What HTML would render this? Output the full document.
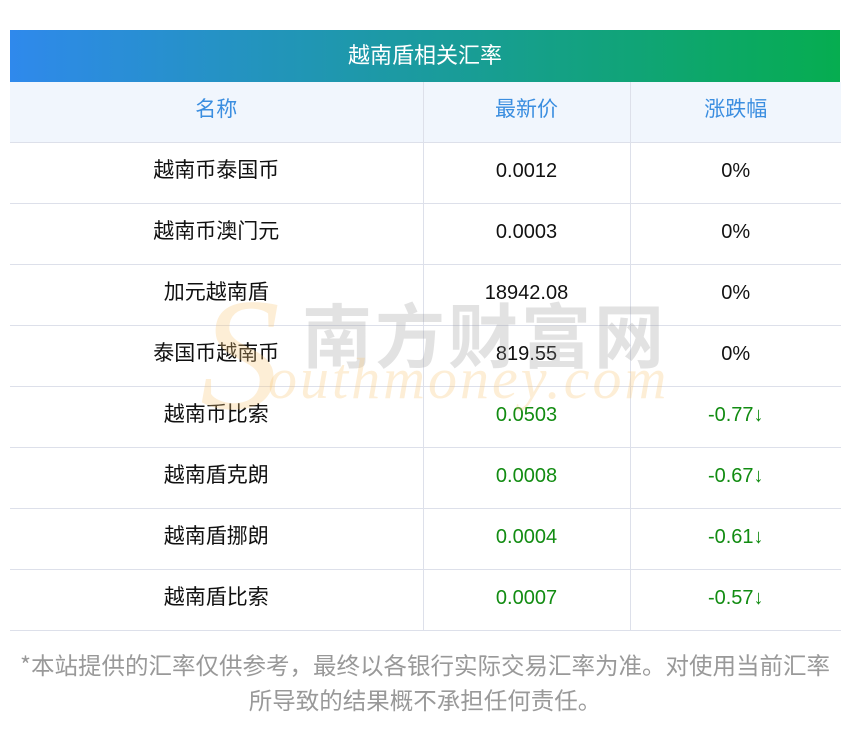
<!DOCTYPE html>
<html><head><meta charset="utf-8"><style>
body{margin:0;width:850px;height:733px;background:#fff;font-family:"Liberation Sans","Noto Sans CJK SC",sans-serif;position:relative;overflow:hidden}
.title{position:absolute;left:10px;top:30px;width:830px;height:52px;background:linear-gradient(90deg,#2f89ec,#06ad50);color:#fff;font-size:22px;line-height:48px;text-align:center;font-family:"Noto Sans CJK SC",sans-serif}
table{position:absolute;left:10px;top:82px;width:831px;border-collapse:collapse;font-size:20px}
td{border:1px solid #dde0ea;text-align:center;padding:0 0 3px 0;box-sizing:border-box;height:61px;color:#111;line-height:24px}
td.c{font-family:"Noto Sans CJK SC",sans-serif;font-size:21px;padding-bottom:7px}
tr:first-child td{background:#f1f6fd;color:#3b8ee0;border-top:none;height:60px}
td:first-child{border-left:none;width:413px}
td:nth-child(2){width:207px}
td:last-child{border-right:none}
.g{color:#128c12}
.foot{position:absolute;left:0;top:647px;width:850px;text-align:center;color:#999;font-size:23.5px;line-height:35px;font-family:"Noto Sans CJK SC",sans-serif;white-space:nowrap}
.wm1{position:absolute;left:302px;top:282px;font-size:70px;color:rgba(150,150,150,.28);letter-spacing:3px;font-family:"Noto Sans CJK SC",sans-serif;font-weight:bold;z-index:2}
.wm2{position:absolute;left:268px;top:345px;font-size:58px;color:rgba(250,200,120,.3);font-style:italic;font-family:"Liberation Serif",serif;letter-spacing:3px;z-index:2}
.wmS{position:absolute;left:200px;top:262px;font-size:160px;color:rgba(250,200,120,.3);font-style:italic;font-family:"Liberation Serif",serif;z-index:2}
</style></head><body>
<div class="title">越南盾相关汇率</div>
<table>
<tr><td class="c">名称</td><td class="c">最新价</td><td class="c">涨跌幅</td></tr>
<tr><td class="c">越南币泰国币</td><td>0.0012</td><td>0%</td></tr>
<tr><td class="c">越南币澳门元</td><td>0.0003</td><td>0%</td></tr>
<tr><td class="c">加元越南盾</td><td>18942.08</td><td>0%</td></tr>
<tr><td class="c">泰国币越南币</td><td>819.55</td><td>0%</td></tr>
<tr><td class="c">越南币比索</td><td class="g">0.0503</td><td class="g">-0.77↓</td></tr>
<tr><td class="c">越南盾克朗</td><td class="g">0.0008</td><td class="g">-0.67↓</td></tr>
<tr><td class="c">越南盾挪朗</td><td class="g">0.0004</td><td class="g">-0.61↓</td></tr>
<tr><td class="c">越南盾比索</td><td class="g">0.0007</td><td class="g">-0.57↓</td></tr>
</table>
<div class="wmS">S</div>
<div class="wm1">南方财富网</div>
<div class="wm2">outhmoney.com</div>
<div class="foot">*本站提供的汇率仅供参考，最终以各银行实际交易汇率为准。对使用当前汇率<br>所导致的结果概不承担任何责任。</div>
</body></html>
